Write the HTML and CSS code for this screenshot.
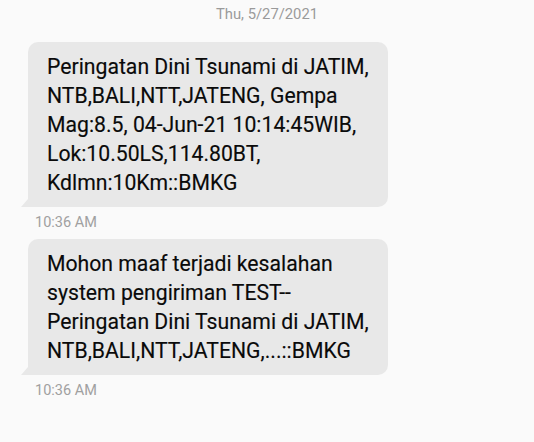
FILE: index.html
```html
<!DOCTYPE html>
<html>
<head>
<meta charset="utf-8">
<link rel="stylesheet" href="styles.css">
</head>
<body>
<div class="thread">
  <div class="date">Thu, 5/27/2021</div>
  <div class="msg">
    <div class="bubble">Peringatan Dini Tsunami di JATIM,<br>NTB,BALI,NTT,JATENG, Gempa<br>Mag:8.5, 04-Jun-21 10:14:45WIB,<br>Lok:10.50LS,114.80BT,<br>Kdlmn:10Km::BMKG</div>
    <div class="time">10:36 AM</div>
  </div>
  <div class="msg">
    <div class="bubble">Mohon maaf terjadi kesalahan<br>system pengiriman TEST--<br>Peringatan Dini Tsunami di JATIM,<br>NTB,BALI,NTT,JATENG,...::BMKG</div>
    <div class="time">10:36 AM</div>
  </div>
</div>
</body>
</html>
```
FILE: styles.css
```css
html, body {
  margin: 0;
  padding: 0;
  background: #fafafa;
}
body {
  font-family: Roboto, "Noto Sans", sans-serif;
  width: 534px;
  height: 442px;
  overflow: hidden;
}
.thread {
  display: flex;
  flex-direction: column;
  padding: 4px 0 0 28px;
}
.date {
  width: 478px;
  text-align: center;
  font-size: 14.8px;
  line-height: 20px;
  color: #9a9a9a;
  margin-bottom: 18px;
}
.msg {
  display: flex;
  flex-direction: column;
  align-items: flex-start;
  margin-bottom: 7px;
}
.bubble {
  position: relative;
  width: 341px;
  padding: 10px 0 10px 19px;
  background: #e8e8e8;
  border-radius: 10px 10px 10px 0;
  font-size: 21.2px;
  line-height: 29px;
  color: #0a0a0a;
  -webkit-text-stroke: 0.15px #0a0a0a;
}
.bubble::before {
  content: "";
  position: absolute;
  left: -7px;
  bottom: 0;
  width: 7px;
  height: 8px;
  background: #e8e8e8;
  clip-path: polygon(100% 0, 100% 100%, 0 100%);
}
.time {
  margin: 7px 0 0 7px;
  font-size: 14.5px;
  line-height: 18px;
  color: #a0a0a0;
}
```
